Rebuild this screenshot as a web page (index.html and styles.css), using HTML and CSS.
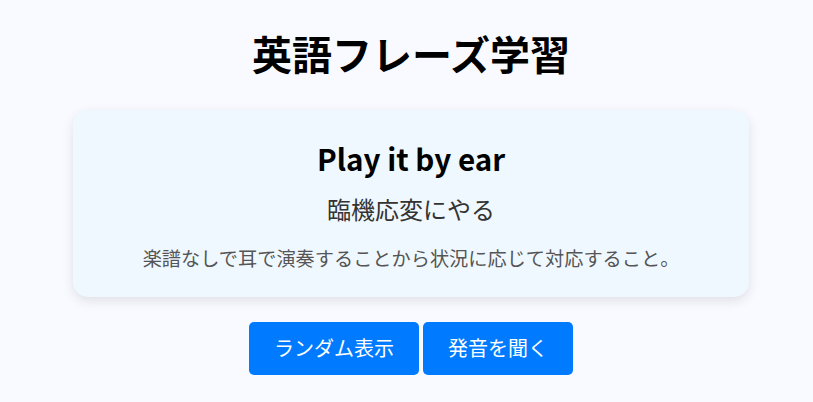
FILE: index.html
```html
<!DOCTYPE html>
<html lang="ja">
<head>
<meta charset="utf-8">
<title>英語フレーズ学習</title>
<link rel="stylesheet" href="styles.css">
</head>
<body>
<main class="page">
  <h1 class="title">英語フレーズ学習</h1>
  <section class="card">
    <h2 class="phrase">Play it by ear</h2>
    <p class="meaning">臨機応変にやる</p>
    <p class="desc">楽譜なしで耳で演奏することから状況に応じて対応すること。</p>
  </section>
  <div class="actions">
    <button class="btn">ランダム表示</button>
    <button class="btn">発音を聞く</button>
  </div>
</main>
</body>
</html>
```

FILE: styles.css
```css
html, body {
  margin: 0;
  padding: 0;
}
body {
  background: #f8faff;
  font-family: "Noto Sans CJK JP", "Noto Sans", sans-serif;
  color: #000;
}
.page {
  display: flex;
  flex-direction: column;
  align-items: center;
  padding: 25px 0 0 9px;
}
.title {
  margin: 0 0 27px;
  font-size: 40px;
  font-weight: 700;
  line-height: 1.448;
}
.card {
  box-sizing: border-box;
  width: 676px;
  background: #f0f8ff;
  border-radius: 15px;
  box-shadow: 0 4px 12px rgba(0, 0, 0, 0.1);
  padding: 28px 30px 25px;
  text-align: center;
}
.phrase {
  margin: 0 0 11px;
  font-size: 29.6px;
  font-weight: 700;
  line-height: 1.448;
}
.meaning {
  margin: 0 0 18px;
  font-size: 24px;
  color: #333;
  line-height: 1.448;
}
.desc {
  margin: 0;
  font-size: 19.2px;
  color: #555;
  line-height: 1.448;
}
.actions {
  display: flex;
  gap: 4px;
  margin-top: 25px;
}
.btn {
  font-family: inherit;
  font-size: 20px;
  line-height: 1.448;
  padding: 12px 25px;
  color: #fff;
  background: #007bff;
  border: none;
  border-radius: 5px;
  cursor: pointer;
}
```
